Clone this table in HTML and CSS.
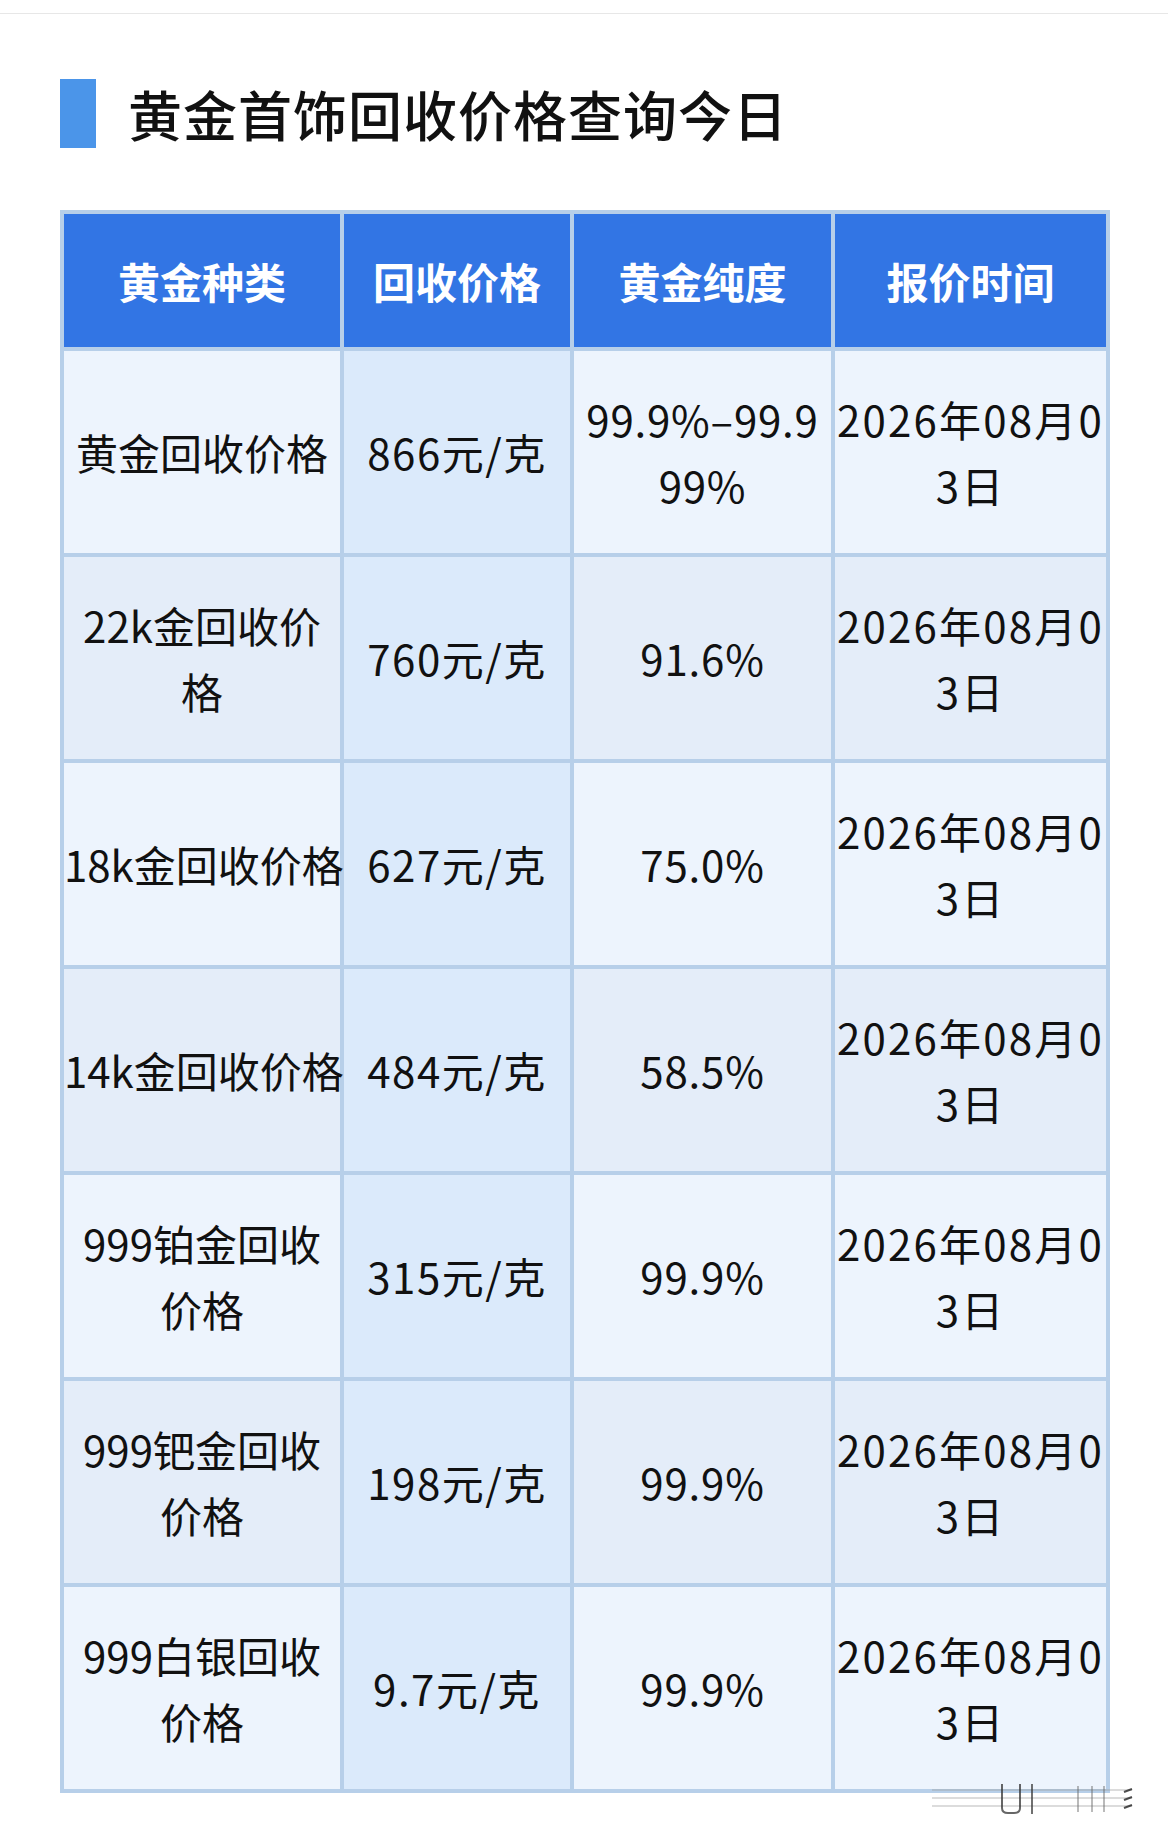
FILE: index.html
```html
<!DOCTYPE html>
<html lang="zh-CN">
<head>
<meta charset="utf-8">
<title>黄金首饰回收价格查询今日</title>
<link rel="stylesheet" href="styles.css">
</head>
<body>
<div class="topline"></div>
<h1 class="title"><span class="bar"></span><span class="title-text">黄金首饰回收价格查询今日</span></h1>
<table class="price-table">
  <colgroup>
    <col class="c1"><col class="c2"><col class="c3"><col class="c4">
  </colgroup>
  <thead>
    <tr><th>黄金种类</th><th>回收价格</th><th>黄金纯度</th><th>报价时间</th></tr>
  </thead>
  <tbody>
    <tr><td>黄金回收价格</td><td class="price">866元/克</td><td class="purity">99.9%–99.9<br>99%</td><td class="date">2026年08月0<br>3日</td></tr>
    <tr class="even"><td>22k金回收价<br>格</td><td class="price">760元/克</td><td class="purity">91.6%</td><td class="date">2026年08月0<br>3日</td></tr>
    <tr><td>18k金回收价格</td><td class="price">627元/克</td><td class="purity">75.0%</td><td class="date">2026年08月0<br>3日</td></tr>
    <tr class="even"><td>14k金回收价格</td><td class="price">484元/克</td><td class="purity">58.5%</td><td class="date">2026年08月0<br>3日</td></tr>
    <tr><td>999铂金回收<br>价格</td><td class="price">315元/克</td><td class="purity">99.9%</td><td class="date">2026年08月0<br>3日</td></tr>
    <tr class="even"><td>999钯金回收<br>价格</td><td class="price">198元/克</td><td class="purity">99.9%</td><td class="date">2026年08月0<br>3日</td></tr>
    <tr><td>999白银回收<br>价格</td><td class="price">9.7元/克</td><td class="purity">99.9%</td><td class="date">2026年08月0<br>3日</td></tr>
  </tbody>
</table>
<svg class="watermark" width="210" height="36" viewBox="0 0 210 36">
  <g stroke="#9a9a9a" stroke-opacity="0.35" stroke-width="2">
    <line x1="0" y1="10" x2="200" y2="10"/>
    <line x1="0" y1="18" x2="200" y2="18"/>
    <line x1="0" y1="26" x2="200" y2="26"/>
  </g>
  <path d="M70 4 V28 Q70 33 76 33 H82 Q88 33 88 28 V4" fill="none" stroke="#333" stroke-opacity="0.75" stroke-width="2"/>
  <line x1="100" y1="4" x2="100" y2="34" stroke="#333" stroke-opacity="0.7" stroke-width="2"/>
  <g stroke="#666" stroke-opacity="0.45" stroke-width="2">
    <line x1="146" y1="6" x2="146" y2="32"/>
    <line x1="160" y1="6" x2="160" y2="32"/>
    <line x1="172" y1="6" x2="172" y2="32"/>
  </g>
  <g stroke="#222" stroke-opacity="0.8" stroke-width="2">
    <line x1="192" y1="12" x2="200" y2="9"/>
    <line x1="192" y1="20" x2="200" y2="17"/>
    <line x1="192" y1="28" x2="200" y2="25"/>
  </g>
</svg>
</body>
</html>
```

FILE: styles.css
```css
html, body {
  margin: 0;
  padding: 0;
  background: #ffffff;
}
body {
  position: relative;
  width: 1168px;
  min-height: 1840px;
  font-family: "Noto Sans CJK SC", "Noto Sans", sans-serif;
  color: #111111;
}
.topline {
  margin-top: 13px;
  height: 1px;
  background: #e7e7e7;
}
.title {
  display: flex;
  align-items: center;
  gap: 32px;
  margin: 65px 0 0 60px;
  height: 69px;
  font-size: 54px;
  font-weight: 500;
  letter-spacing: 1px;
  line-height: 69px;
  color: #111111;
}
.bar {
  width: 36px;
  height: 69px;
  background: #4b95e9;
}
.price-table {
  margin: 62px 0 0 60px;
  width: 1050px;
  table-layout: fixed;
  border-collapse: separate;
  border-spacing: 4px;
  background: #b7cfe9;
}
.c1 { width: 276px; }
.c2 { width: 226px; }
.c3 { width: 257px; }
.c4 { width: 271px; }
.price-table th {
  height: 133px;
  padding: 0;
  background: #3275e4;
  color: #ffffff;
  font-size: 42px;
  font-weight: 700;
  text-align: center;
  vertical-align: middle;
}
.price-table td {
  height: 202px;
  padding: 0;
  background: #edf4fd;
  font-size: 42px;
  line-height: 66px;
  text-align: center;
  vertical-align: middle;
  white-space: nowrap;
  overflow: visible;
}
.price-table td.price {
  letter-spacing: 1.5px;
}
.price-table td.purity {
  letter-spacing: 0.8px;
}
.price-table td.date {
  letter-spacing: 2.2px;
}
.price-table tr.even td {
  background: #e4edf9;
}
.price-table td.price,
.price-table tr.even td.price {
  background: #dbeafb;
}
.watermark {
  position: absolute;
  left: 932px;
  top: 1780px;
}
```
